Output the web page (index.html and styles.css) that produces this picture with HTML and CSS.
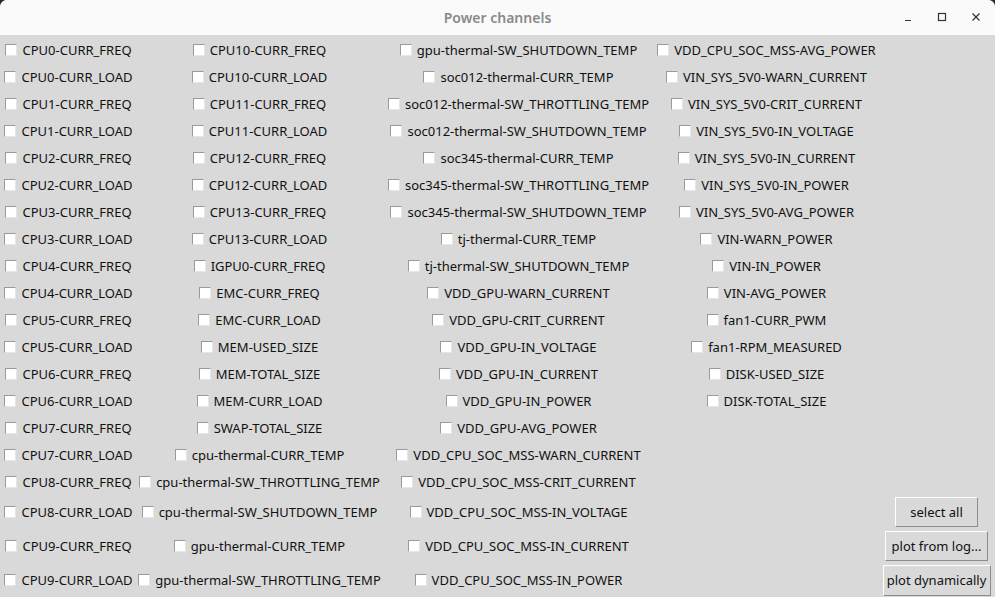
FILE: index.html
```html
<!DOCTYPE html>
<html>
<head>
<meta charset="utf-8">
<link rel="stylesheet" href="styles.css">
</head>
<body>
<div class="window">
  <div class="titlebar">
    <div class="title">Power channels</div>
    <div class="controls">
      <span class="ctl"><svg width="10" height="10" viewBox="0 0 10 10"><path d="M2 8.5h6" stroke="#333" stroke-width="1.2"/></svg></span>
      <span class="ctl"><svg width="10" height="10" viewBox="0 0 10 10"><rect x="1.5" y="1.5" width="7" height="7" fill="none" stroke="#333" stroke-width="1.2"/></svg></span>
      <span class="ctl"><svg width="10" height="10" viewBox="0 0 10 10"><path d="M1.5 1.5l7 7M8.5 1.5l-7 7" stroke="#333" stroke-width="1.2"/></svg></span>
    </div>
  </div>
  <div class="grid">
    <div class="btn-cell r18"><span class="btn w1">select all</span></div>
    <div class="btn-cell r19"><span class="btn w2">plot from log...</span></div>
    <div class="btn-cell r20"><span class="btn w3">plot dynamically</span></div>

    <div class="cell"><span class="cb"><i class="box"></i>CPU0-CURR_FREQ</span></div>
    <div class="cell"><span class="cb"><i class="box"></i>CPU0-CURR_LOAD</span></div>
    <div class="cell"><span class="cb"><i class="box"></i>CPU1-CURR_FREQ</span></div>
    <div class="cell"><span class="cb"><i class="box"></i>CPU1-CURR_LOAD</span></div>
    <div class="cell"><span class="cb"><i class="box"></i>CPU2-CURR_FREQ</span></div>
    <div class="cell"><span class="cb"><i class="box"></i>CPU2-CURR_LOAD</span></div>
    <div class="cell"><span class="cb"><i class="box"></i>CPU3-CURR_FREQ</span></div>
    <div class="cell"><span class="cb"><i class="box"></i>CPU3-CURR_LOAD</span></div>
    <div class="cell"><span class="cb"><i class="box"></i>CPU4-CURR_FREQ</span></div>
    <div class="cell"><span class="cb"><i class="box"></i>CPU4-CURR_LOAD</span></div>
    <div class="cell"><span class="cb"><i class="box"></i>CPU5-CURR_FREQ</span></div>
    <div class="cell"><span class="cb"><i class="box"></i>CPU5-CURR_LOAD</span></div>
    <div class="cell"><span class="cb"><i class="box"></i>CPU6-CURR_FREQ</span></div>
    <div class="cell"><span class="cb"><i class="box"></i>CPU6-CURR_LOAD</span></div>
    <div class="cell"><span class="cb"><i class="box"></i>CPU7-CURR_FREQ</span></div>
    <div class="cell"><span class="cb"><i class="box"></i>CPU7-CURR_LOAD</span></div>
    <div class="cell"><span class="cb"><i class="box"></i>CPU8-CURR_FREQ</span></div>
    <div class="cell"><span class="cb"><i class="box"></i>CPU8-CURR_LOAD</span></div>
    <div class="cell"><span class="cb"><i class="box"></i>CPU9-CURR_FREQ</span></div>
    <div class="cell"><span class="cb"><i class="box"></i>CPU9-CURR_LOAD</span></div>

    <div class="cell"><span class="cb"><i class="box"></i>CPU10-CURR_FREQ</span></div>
    <div class="cell"><span class="cb"><i class="box"></i>CPU10-CURR_LOAD</span></div>
    <div class="cell"><span class="cb"><i class="box"></i>CPU11-CURR_FREQ</span></div>
    <div class="cell"><span class="cb"><i class="box"></i>CPU11-CURR_LOAD</span></div>
    <div class="cell"><span class="cb"><i class="box"></i>CPU12-CURR_FREQ</span></div>
    <div class="cell"><span class="cb"><i class="box"></i>CPU12-CURR_LOAD</span></div>
    <div class="cell"><span class="cb"><i class="box"></i>CPU13-CURR_FREQ</span></div>
    <div class="cell"><span class="cb"><i class="box"></i>CPU13-CURR_LOAD</span></div>
    <div class="cell"><span class="cb"><i class="box"></i>IGPU0-CURR_FREQ</span></div>
    <div class="cell"><span class="cb"><i class="box"></i>EMC-CURR_FREQ</span></div>
    <div class="cell"><span class="cb"><i class="box"></i>EMC-CURR_LOAD</span></div>
    <div class="cell"><span class="cb"><i class="box"></i>MEM-USED_SIZE</span></div>
    <div class="cell"><span class="cb"><i class="box"></i>MEM-TOTAL_SIZE</span></div>
    <div class="cell"><span class="cb"><i class="box"></i>MEM-CURR_LOAD</span></div>
    <div class="cell"><span class="cb"><i class="box"></i>SWAP-TOTAL_SIZE</span></div>
    <div class="cell"><span class="cb"><i class="box"></i>cpu-thermal-CURR_TEMP</span></div>
    <div class="cell"><span class="cb"><i class="box"></i>cpu-thermal-SW_THROTTLING_TEMP</span></div>
    <div class="cell"><span class="cb"><i class="box"></i>cpu-thermal-SW_SHUTDOWN_TEMP</span></div>
    <div class="cell"><span class="cb"><i class="box"></i>gpu-thermal-CURR_TEMP</span></div>
    <div class="cell"><span class="cb"><i class="box"></i>gpu-thermal-SW_THROTTLING_TEMP</span></div>

    <div class="cell"><span class="cb"><i class="box"></i>gpu-thermal-SW_SHUTDOWN_TEMP</span></div>
    <div class="cell"><span class="cb"><i class="box"></i>soc012-thermal-CURR_TEMP</span></div>
    <div class="cell"><span class="cb"><i class="box"></i>soc012-thermal-SW_THROTTLING_TEMP</span></div>
    <div class="cell"><span class="cb"><i class="box"></i>soc012-thermal-SW_SHUTDOWN_TEMP</span></div>
    <div class="cell"><span class="cb"><i class="box"></i>soc345-thermal-CURR_TEMP</span></div>
    <div class="cell"><span class="cb"><i class="box"></i>soc345-thermal-SW_THROTTLING_TEMP</span></div>
    <div class="cell"><span class="cb"><i class="box"></i>soc345-thermal-SW_SHUTDOWN_TEMP</span></div>
    <div class="cell"><span class="cb"><i class="box"></i>tj-thermal-CURR_TEMP</span></div>
    <div class="cell"><span class="cb"><i class="box"></i>tj-thermal-SW_SHUTDOWN_TEMP</span></div>
    <div class="cell"><span class="cb"><i class="box"></i>VDD_GPU-WARN_CURRENT</span></div>
    <div class="cell"><span class="cb"><i class="box"></i>VDD_GPU-CRIT_CURRENT</span></div>
    <div class="cell"><span class="cb"><i class="box"></i>VDD_GPU-IN_VOLTAGE</span></div>
    <div class="cell"><span class="cb"><i class="box"></i>VDD_GPU-IN_CURRENT</span></div>
    <div class="cell"><span class="cb"><i class="box"></i>VDD_GPU-IN_POWER</span></div>
    <div class="cell"><span class="cb"><i class="box"></i>VDD_GPU-AVG_POWER</span></div>
    <div class="cell"><span class="cb"><i class="box"></i>VDD_CPU_SOC_MSS-WARN_CURRENT</span></div>
    <div class="cell"><span class="cb"><i class="box"></i>VDD_CPU_SOC_MSS-CRIT_CURRENT</span></div>
    <div class="cell"><span class="cb"><i class="box"></i>VDD_CPU_SOC_MSS-IN_VOLTAGE</span></div>
    <div class="cell"><span class="cb"><i class="box"></i>VDD_CPU_SOC_MSS-IN_CURRENT</span></div>
    <div class="cell"><span class="cb"><i class="box"></i>VDD_CPU_SOC_MSS-IN_POWER</span></div>

    <div class="cell"><span class="cb"><i class="box"></i>VDD_CPU_SOC_MSS-AVG_POWER</span></div>
    <div class="cell"><span class="cb"><i class="box"></i>VIN_SYS_5V0-WARN_CURRENT</span></div>
    <div class="cell"><span class="cb"><i class="box"></i>VIN_SYS_5V0-CRIT_CURRENT</span></div>
    <div class="cell"><span class="cb"><i class="box"></i>VIN_SYS_5V0-IN_VOLTAGE</span></div>
    <div class="cell"><span class="cb"><i class="box"></i>VIN_SYS_5V0-IN_CURRENT</span></div>
    <div class="cell"><span class="cb"><i class="box"></i>VIN_SYS_5V0-IN_POWER</span></div>
    <div class="cell"><span class="cb"><i class="box"></i>VIN_SYS_5V0-AVG_POWER</span></div>
    <div class="cell"><span class="cb"><i class="box"></i>VIN-WARN_POWER</span></div>
    <div class="cell"><span class="cb"><i class="box"></i>VIN-IN_POWER</span></div>
    <div class="cell"><span class="cb"><i class="box"></i>VIN-AVG_POWER</span></div>
    <div class="cell"><span class="cb"><i class="box"></i>fan1-CURR_PWM</span></div>
    <div class="cell"><span class="cb"><i class="box"></i>fan1-RPM_MEASURED</span></div>
    <div class="cell"><span class="cb"><i class="box"></i>DISK-USED_SIZE</span></div>
    <div class="cell"><span class="cb"><i class="box"></i>DISK-TOTAL_SIZE</span></div>
  </div>
</div>
</body>
</html>
```

FILE: styles.css
```css
html, body {
  margin: 0;
  padding: 0;
  background: #2a2a2a;
}
body {
  width: 995px;
  height: 597px;
  overflow: hidden;
  font-family: "Noto Sans", "Open Sans", sans-serif;
}
.window {
  width: 995px;
  height: 597px;
  background: #d9d9d9;
  border-radius: 7px 7px 0 0;
  overflow: hidden;
}
.titlebar {
  height: 35px;
  background: #fafafa;
  display: flex;
  align-items: center;
  justify-content: center;
  position: relative;
}
.title {
  font-size: 14px;
  font-weight: 600;
  color: #8a8a8a;
  letter-spacing: 0;
}
.controls {
  position: absolute;
  right: 14px;
  top: 12px;
  display: flex;
  gap: 24px;
}
.ctl {
  width: 10px;
  height: 10px;
  display: block;
}
.ctl svg { display: block; }
.grid {
  display: grid;
  grid-template-columns: 137px 245px 273px 223px 117px;
  grid-template-rows: repeat(17, 27px) repeat(3, 34px);
  grid-auto-flow: column;
  padding-top: 1px;
  font-size: 13px;
  color: #111;
}
.cell {
  display: flex;
  align-items: center;
  justify-content: center;
  white-space: nowrap;
}
.cb {
  display: inline-flex;
  align-items: center;
  gap: 5px;
}
.box {
  display: block;
  width: 10px;
  height: 10px;
  background: #fff;
  border-top: 1px solid #9a9a9a;
  border-left: 1px solid #9a9a9a;
  border-right: 1px solid #e6e6e6;
  border-bottom: 1px solid #e6e6e6;
}
.btn-cell {
  grid-column: 5;
  display: flex;
  align-items: center;
  justify-content: center;
}
.r18 { grid-row: 18; }
.r19 { grid-row: 19; }
.r20 { grid-row: 20; }
.btn {
  box-sizing: border-box;
  height: 30px;
  display: flex;
  align-items: center;
  justify-content: center;
  background: #d9d9d9;
  border: 1px solid;
  border-color: #ffffff #8c8c8c #8c8c8c #ffffff;
  white-space: nowrap;
}
.w1 { width: 83px; }
.w2 { width: 103px; }
.w3 { width: 108px; height: 31px; }
```
